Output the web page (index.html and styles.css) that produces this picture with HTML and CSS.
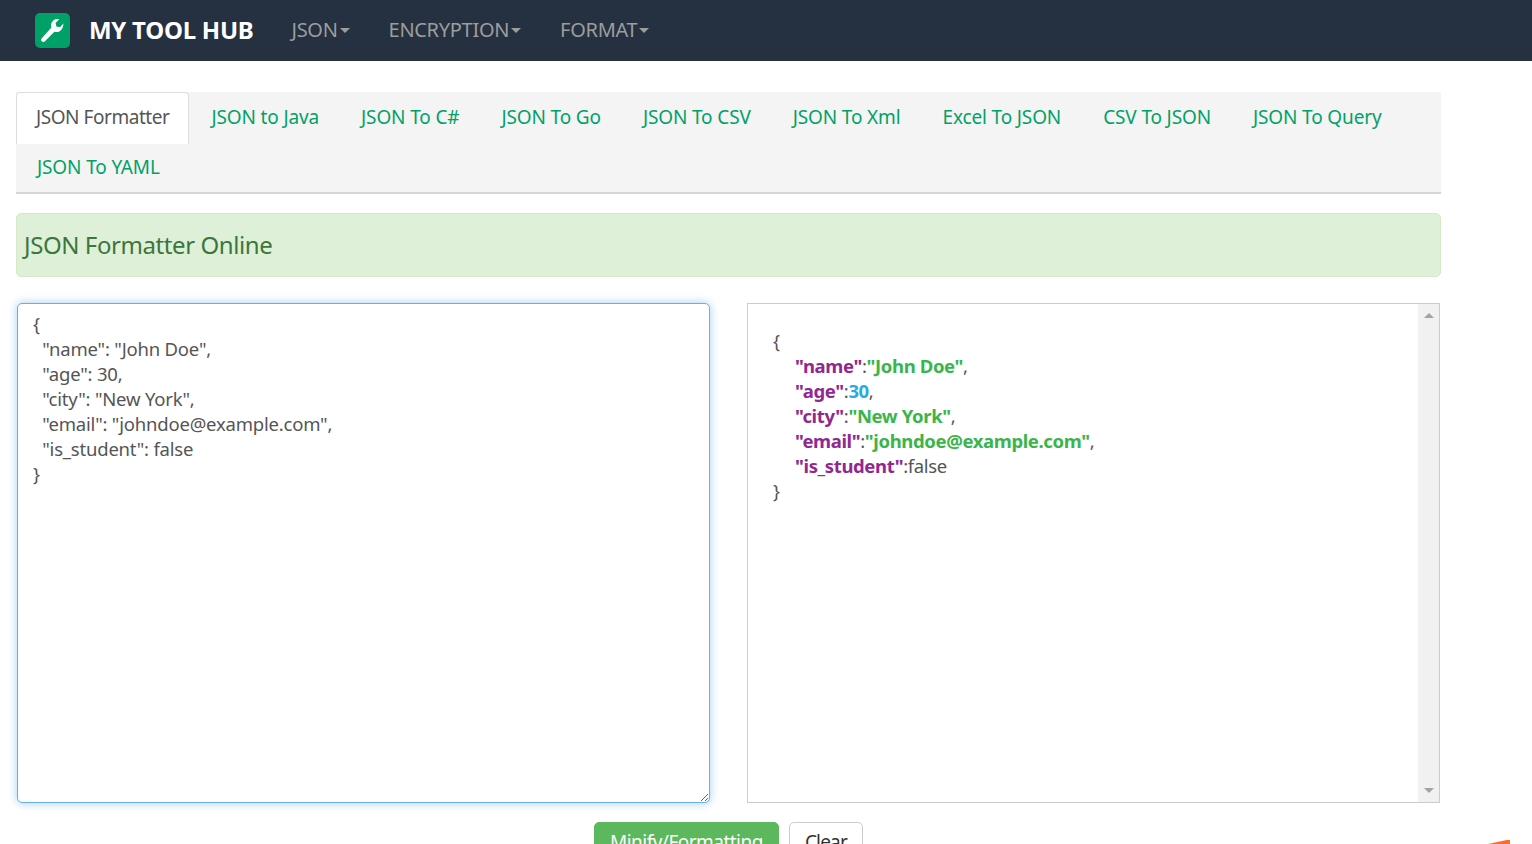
FILE: index.html
```html
<!DOCTYPE html>
<html lang="en">
<head>
<meta charset="utf-8">
<title>JSON Formatter Online - My Tool Hub</title>
<link rel="stylesheet" href="styles.css">
</head>
<body>
<nav class="navbar">
  <a class="brand" href="#">
    <span class="logo">
      <svg viewBox="0 0 24 24" width="27" height="27" aria-hidden="true"><path fill="#fff" d="M21.800 5.800l-3.300 3.300-3-.7-.8-3 3.300-3.300c-2-.6-4.200-.1-5.700 1.400-1.600 1.600-2 3.800-1.300 5.800L2.500 18.800c-.8.8-.8 2 0 2.800s2 .8 2.800 0l8.400-8.500c2 .7 4.200.3 5.800-1.300 1.500-1.500 2.100-3.800 2.300-6z"/></svg>
    </span>
    <span class="brand-name">MY TOOL HUB</span>
  </a>
  <ul class="menu">
    <li class="menu-item">JSON<span class="caret"></span></li>
    <li class="menu-item">ENCRYPTION<span class="caret"></span></li>
    <li class="menu-item">FORMAT<span class="caret"></span></li>
  </ul>
</nav>
<main class="content">
  <ul class="tabs">
    <li class="tab active"><a href="#">JSON Formatter</a></li>
    <li class="tab"><a href="#">JSON to Java</a></li>
    <li class="tab"><a href="#">JSON To C#</a></li>
    <li class="tab"><a href="#">JSON To Go</a></li>
    <li class="tab"><a href="#">JSON To CSV</a></li>
    <li class="tab"><a href="#">JSON To Xml</a></li>
    <li class="tab"><a href="#">Excel To JSON</a></li>
    <li class="tab"><a href="#">CSV To JSON</a></li>
    <li class="tab"><a href="#">JSON To Query</a></li>
    <li class="tab"><a href="#">JSON To YAML</a></li>
  </ul>
  <h1 class="banner">JSON Formatter Online</h1>
  <div class="panes">
    <textarea class="input" spellcheck="false">{
  "name": "John Doe",
  "age": 30,
  "city": "New York",
  "email": "johndoe@example.com",
  "is_student": false
}</textarea>
    <div class="output">
      <div class="json">
        <div>{</div>
        <div class="row"><b class="key">"name"</b>:<b class="str">"John Doe"</b>,</div>
        <div class="row"><b class="key">"age"</b>:<b class="num">30</b>,</div>
        <div class="row"><b class="key">"city"</b>:<b class="str">"New York"</b>,</div>
        <div class="row"><b class="key">"email"</b>:<b class="str">"johndoe@example.com"</b>,</div>
        <div class="row"><b class="key">"is_student"</b>:false</div>
        <div>}</div>
      </div>
      <div class="scrollbar"><span class="arrow up"></span><span class="arrow down"></span></div>
    </div>
  </div>
  <div class="actions">
    <button class="btn primary" type="button">Minify/Formatting</button>
    <button class="btn clear" type="button">Clear</button>
  </div>
</main>
<span class="corner-mark"></span>
</body>
</html>
```
FILE: styles.css
```css
* { box-sizing: border-box; }
html, body { height: 100%; }
body {
  margin: 0;
  height: 844px;
  overflow: hidden;
  background: #fff;
  color: #555;
  font-family: "Noto Sans", "Open Sans", sans-serif;
  font-size: 18px;
  position: relative;
}
a { text-decoration: none; }
.navbar {
  height: 61px;
  background: #253140;
  display: flex;
  align-items: center;
  padding-left: 35px;
}
.brand { display: flex; align-items: center; gap: 19px; color: #fff; }
.logo {
  width: 35px; height: 35px;
  background: #00a167;
  border-radius: 5px;
  display: flex; align-items: center; justify-content: center;
}
.brand-name { font-size: 24px; font-weight: 700; letter-spacing: -0.26px; margin-top: -3px; }
.menu { list-style: none; display: flex; margin: -2px 0 0 38px; padding: 0; gap: 39px; }
.menu-item { color: #9d9d9d; font-size: 20px; letter-spacing: -0.3px; display: flex; align-items: center; }
.caret {
  width: 0; height: 0; margin-left: 2px; margin-top: 2px;
  border-left: 5px solid transparent;
  border-right: 5px solid transparent;
  border-top: 5px solid #9d9d9d;
}
.content { width: 1425px; margin-left: 16px; padding-top: 31px; }
.tabs {
  list-style: none; margin: 0; padding: 0;
  display: flex; flex-wrap: wrap;
  background: #f4f4f4;
  border-bottom: 2px solid #d5d5d5;
}
.tab { height: 50px; }
.tab.active { margin-right: 1px; }
.tab a {
  display: block; height: 51px;
  padding: 0 21px;
  line-height: 51px;
  font-size: 19px;
  letter-spacing: -0.14px;
  color: #00a167;
  white-space: nowrap;
  border-radius: 4px 4px 0 0;
}
.tab.active a {
  position: relative;
  height: 52px;
  padding: 0 19px;
  background: #fff;
  color: #555;
  border: 1px solid #ddd;
  border-bottom: 0;
  line-height: 49px;
  letter-spacing: -0.45px;
}
.banner {
  margin: 19px 0 26px;
  height: 64px;
  padding-left: 7px;
  background: #dff0d8;
  border: 1px solid #d6e9c6;
  border-radius: 5px;
  color: #3c763d;
  font-size: 24px;
  font-weight: 400;
  line-height: 62px;
  letter-spacing: -0.42px;
}
.panes { display: flex; align-items: stretch; gap: 37px; height: 500px; padding-left: 1px; width: 1424px; }
.input {
  flex: 0 0 693px;
  height: 500px;
  padding: 7px 15px;
  border: 1px solid #66afe9;
  border-radius: 5px;
  outline: 0;
  box-shadow: 0 0 10px rgba(102, 175, 233, .6);
  font-family: inherit;
  font-size: 18.5px;
  line-height: 25px;
  letter-spacing: -0.2px;
  color: #555;
  resize: both;
  overflow: hidden;
}
.output {
  flex: 0 0 693px;
  display: flex;
  border: 1px solid #ccc;
}
.json {
  flex: 1;
  padding: 24px 25px;
  font-size: 18.5px;
  line-height: 25px;
  letter-spacing: -0.37px;
  color: #555;
}
.row { padding-left: 22px; }
.key { color: #92278f; }
.str { color: #3ab54a; }
.num { color: #25aae2; }
.scrollbar {
  flex: 0 0 21px;
  background: #f1f1f1;
  display: flex; flex-direction: column; justify-content: space-between; align-items: center;
  padding: 9px 0;
}
.arrow { width: 0; height: 0; border-left: 5px solid transparent; border-right: 5px solid transparent; }
.arrow.up { border-bottom: 5px solid #a3a3a3; }
.arrow.down { border-top: 5px solid #a3a3a3; }
.actions { display: flex; justify-content: center; gap: 10px; margin-top: 19px; }
.btn {
  height: 38px;
  padding: 2px 15px 0;
  background: #fff;
  border: 1px solid #ccc;
  border-radius: 5px;
  font-family: inherit;
  font-size: 19px;
  color: #333;
}
.btn.primary { background: #5cb85c; border-color: #5cb85c; color: #fff; letter-spacing: -0.52px; }
.btn.clear { letter-spacing: -0.8px; }
.corner-mark {
  position: absolute;
  left: 1488px; top: 840px;
  width: 22px; height: 4px;
  background: #ff6a2b;
  clip-path: polygon(0 100%, 85% 0, 100% 0, 100% 100%);
}
```
